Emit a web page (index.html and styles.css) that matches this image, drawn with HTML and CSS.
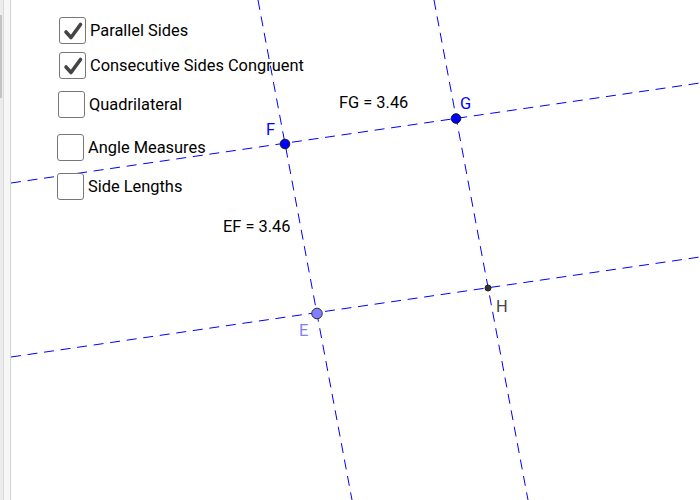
FILE: index.html
```html
<!DOCTYPE html>
<html>
<head>
<meta charset="utf-8">
<link rel="stylesheet" href="styles.css">
</head>
<body>
<div class="app">
  <div class="rail"><div class="thumb"></div></div>
  <div class="gutter"></div>
  <div class="canvas">
    <svg class="graphics" viewBox="11 0 689 500" width="689" height="500">
      <g class="lines">
        <line x1="11" y1="183" x2="700" y2="83"/>
        <line x1="11" y1="357" x2="700" y2="257"/>
        <line x1="258" y1="0" x2="352" y2="500"/>
        <line x1="434" y1="0" x2="528" y2="500"/>
      </g>
      <circle class="pt free" cx="285" cy="144" r="4.8"/>
      <circle class="pt free" cx="456" cy="118.5" r="4.8"/>
      <circle class="pt light" cx="317" cy="313.5" r="5.3"/>
      <circle class="pt dep" cx="488" cy="288" r="3"/>
      <text class="lbl blue" x="266" y="135">F</text>
      <text class="lbl blue" x="460" y="109">G</text>
      <text class="lbl lightblue" x="299" y="336">E</text>
      <text class="lbl grey" x="496" y="312">H</text>
      <text class="lbl black" x="339" y="108">FG = 3.46</text>
      <text class="lbl black" x="223" y="232">EF = 3.46</text>
    </svg>
    <label class="cb row1"><span class="box"><svg viewBox="0 0 26 26" width="26" height="26"><path d="M6 14 L11 19.5 L20.5 6.5"/></svg></span><span class="txt">Parallel Sides</span></label>
    <label class="cb row2"><span class="box"><svg viewBox="0 0 26 26" width="26" height="26"><path d="M6 14 L11 19.5 L20.5 6.5"/></svg></span><span class="txt">Consecutive Sides Congruent</span></label>
    <label class="cb row3"><span class="box"></span><span class="txt">Quadrilateral</span></label>
    <label class="cb row4"><span class="box"></span><span class="txt">Angle Measures</span></label>
    <label class="cb row5"><span class="box"></span><span class="txt">Side Lengths</span></label>
  </div>
</div>
</body>
</html>
```

FILE: styles.css
```css
html, body {
  margin: 0;
  padding: 0;
  width: 700px;
  height: 500px;
  overflow: hidden;
  background: #ffffff;
  font-family: Roboto, "Liberation Sans", sans-serif;
}
.app {
  display: flex;
  width: 700px;
  height: 500px;
}
.rail {
  position: relative;
  width: 3px;
  background: #ececec;
  border-right: 1px solid #dadada;
}
.thumb {
  position: absolute;
  left: 0;
  top: 15px;
  width: 1.5px;
  height: 83px;
  background: #c4c4c4;
}
.gutter {
  width: 6px;
  background: #f7f7f7;
  border-right: 1px solid #d4d4d4;
}
.canvas {
  position: relative;
  flex: 1;
  height: 500px;
  background: #ffffff;
}
.graphics {
  display: block;
}
.lines line {
  stroke: #0000ff;
  stroke-width: 1;
  stroke-dasharray: 10 6.7;
  fill: none;
}
.pt {
  stroke: #1a1a1a;
  stroke-width: 1;
}
.pt.free { fill: #0000ff; }
.pt.light { fill: #7f7fff; stroke: #333333; }
.pt.dep { fill: #333333; stroke: #222222; }
.lbl {
  font-family: Roboto, "Liberation Sans", sans-serif;
  font-size: 16.4px;
}
.blue { fill: #0000ff; }
.lightblue { fill: #7f7fff; }
.grey { fill: #444444; }
.black { fill: #000000; }

.cb {
  position: absolute;
  display: flex;
  align-items: center;
  gap: 4px;
  font-size: 16.4px;
  color: #000000;
}
.row1 { left: 48px; top: 17px; }
.row2 { left: 48px; top: 52px; }
.row3 { left: 47px; top: 91px; }
.row4 { left: 46px; top: 134px; }
.row5 { left: 46px; top: 173px; }
.box {
  display: block;
  box-sizing: border-box;
  width: 27px;
  height: 27px;
  border: 1.5px solid #777777;
  border-radius: 3px;
  background: #ffffff;
}
.box svg {
  display: block;
  margin: -0.5px;
}
.box path {
  fill: none;
  stroke: #444444;
  stroke-width: 3.6;
  stroke-linecap: round;
  stroke-linejoin: round;
}
.txt {
  line-height: 20px;
  white-space: nowrap;
}
```
